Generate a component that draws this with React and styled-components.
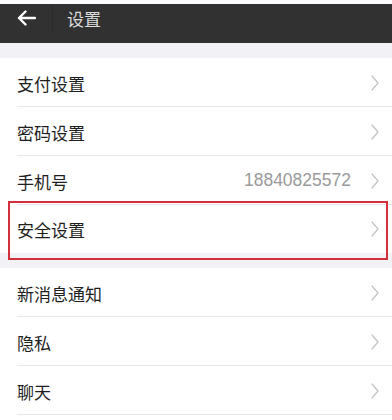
import React from 'react'
import styled, {createGlobalStyle} from 'styled-components'

const GlobalStyle = createGlobalStyle`
  html, body {
    margin: 0;
    padding: 0;
    background: #f2f2f6;
  }
  body {
    font-family: "Noto Sans CJK SC", "Noto Sans", sans-serif;
  }
`

const Page = styled.div`
  width: 392px;
  height: 420px;
  overflow: hidden;
  display: flex;
  flex-direction: column;
  background: #f2f2f6;
  border-top: 4px solid #fbfbfd;
  box-sizing: border-box;
`

const Header = styled.div`
  height: 39px;
  flex: none;
  background: #313131;
  display: flex;
  align-items: center;
  padding-bottom: 11px;
  box-sizing: border-box;
`

const BackButton = styled.div`
  width: 53px;
  height: 28px;
  display: flex;
  align-items: center;
  padding-left: 17px;
  box-sizing: border-box;
  border-right: 1px solid #2a2a2a;
`

const Title = styled.div`
  margin-left: 14px;
  font-size: 17px;
  color: #dcdcdc;
  line-height: 1;
`

const Section = styled.div`
  background: #fff;
  margin-top: 15px;
  flex: ${p => (p.grow ? 1 : 'none')};
`

const RowWrap = styled.div`
  position: relative;
`

const Row = styled.div`
  height: ${p => (p.noLine ? '48px' : '49px')};
  display: flex;
  align-items: center;
  padding: 0 13px 0 17px;
  box-sizing: border-box;
  background-image: ${p => (p.noLine ? 'none' : 'linear-gradient(#e8e8ea, #e8e8ea)')};
  background-size: calc(100% - 17px) 1px;
  background-position: 17px 100%;
  background-repeat: no-repeat;
`

const Label = styled.div`
  flex: 1;
  font-size: 17px;
  color: #1e1e1e;
  line-height: 1;
  padding-top: 1px;
`

const Value = styled.div`
  font-family: "Liberation Sans", Arial, sans-serif;
  font-size: 17.5px;
  color: #9a9a9a;
  margin-right: 20px;
`

const Highlight = styled.div`
  position: absolute;
  left: 8px;
  right: 4px;
  top: -4px;
  height: 59px;
  border: 2px solid #d4303c;
  box-sizing: border-box;
  pointer-events: none;
`

const Chevron = () => (
  <svg width="8" height="16" viewBox="0 0 8 16" fill="none">
    <path d="M1 1 L7 8 L1 15" stroke="#c4c4c8" strokeWidth="1.3" strokeLinejoin="round" strokeLinecap="round" />
  </svg>
)

const BackArrow = () => (
  <svg width="19" height="16" viewBox="0 0 19 16" fill="none">
    <path d="M18 8 H2 M8.5 1.5 L2 8 L8.5 14.5" stroke="#fff" strokeWidth="2.4" strokeLinecap="round" strokeLinejoin="round" />
  </svg>
)

function Item({label, value, noLine}) {
  return (
    <Row noLine={noLine}>
      <Label>{label}</Label>
      {value && <Value>{value}</Value>}
      <Chevron />
    </Row>
  )
}

export default function App() {
  return (
    <Page>
      <GlobalStyle />
      <Header>
        <BackButton>
          <BackArrow />
        </BackButton>
        <Title>设置</Title>
      </Header>
      <Section>
        <Item label="支付设置" />
        <Item label="密码设置" />
        <Item label="手机号" value="18840825572" />
        <RowWrap>
          <Item label="安全设置" noLine />
          <Highlight />
        </RowWrap>
      </Section>
      <Section grow>
        <Item label="新消息通知" />
        <Item label="隐私" />
        <Item label="聊天" />
      </Section>
    </Page>
  )
}
